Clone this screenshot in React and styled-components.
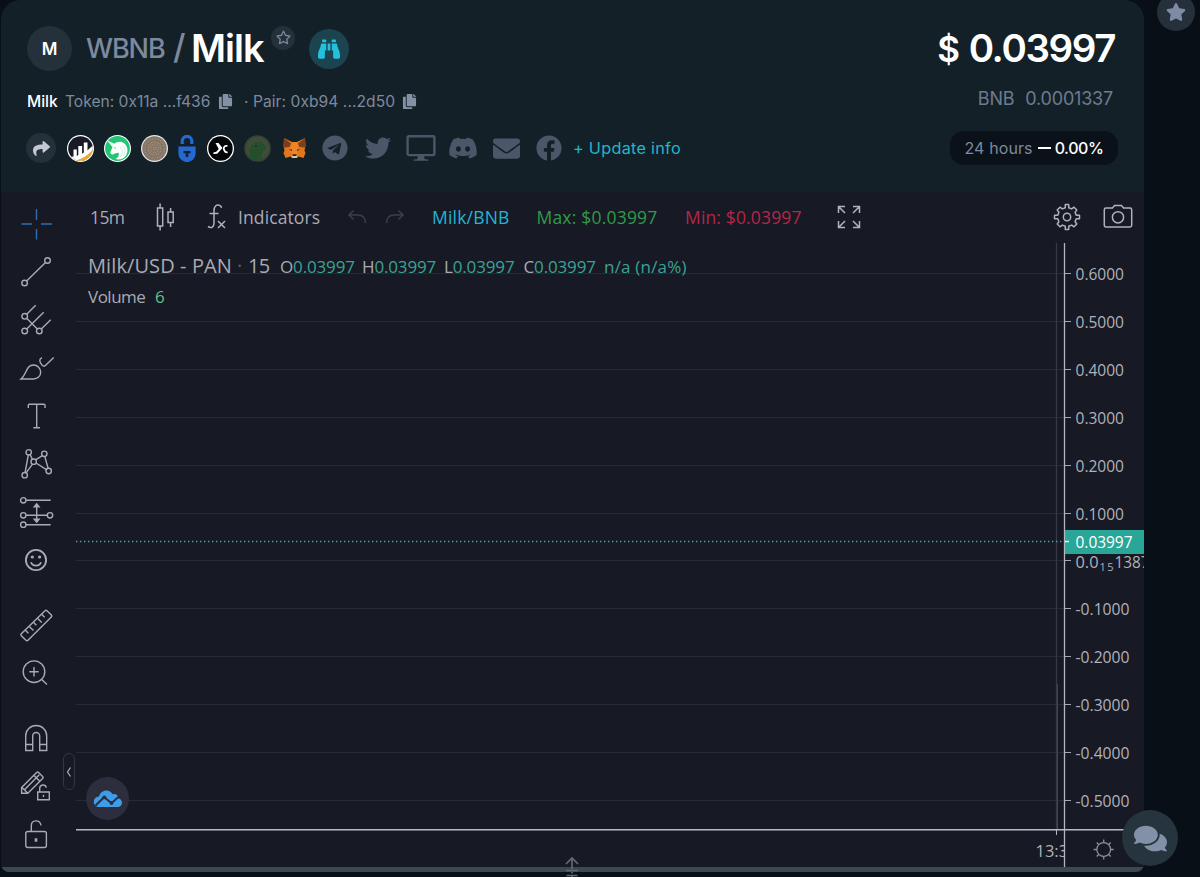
import React from 'react'
import styled, { createGlobalStyle } from 'styled-components';
import {
    FaBinoculars, FaComments, FaCopy, FaDiscord, FaEnvelope, FaFacebook,
    FaRegStar, FaShare, FaStar, FaTelegram, FaTwitter,
} from 'react-icons/fa';

const LEVELS = ['0.6000', '0.5000', '0.4000', '0.3000', '0.2000', '0.1000', null, '-0.1000', '-0.2000', '-0.3000', '-0.4000', '-0.5000'];

const levelY = (i) => Math.round(30 + i * 47.9) + 0.5;

const Crosshair = () => (
    <ToolSvg viewBox='0 0 40 40' $color='#2f6fb8'>
        <path d='M20.5 5v11M20.5 25v10.5M5.5 20H16M25 20h11' />
    </ToolSvg>
)

const TrendLine = () => (
    <ToolSvg viewBox='0 0 40 40'>
        <circle cx='31.5' cy='8.5' r='2.8' /><circle cx='8.6' cy='31' r='2.8' />
        <path d='M29.5 10.5L10.6 29' />
    </ToolSvg>
)

const Pitchfork = () => (
    <ToolSvg viewBox='0 0 40 40'>
        <circle cx='8.7' cy='16.3' r='2.8' /><circle cx='8.7' cy='31' r='2.8' /><circle cx='23.3' cy='31' r='2.8' />
        <path d='M10.7 14.3l9-9M10.7 29L27.7 12.3M25.3 29l9.4-9.2M10.7 18.3L21.3 29' />
    </ToolSvg>
)

const Brush = () => (
    <ToolSvg viewBox='0 0 40 40'>
        <path d='M5 31h12.5c4 0 7.2-3 7.2-6.7S21.5 17 17.5 17C10 17 11 26 5 31z' />
        <path d='M26 9.7c-3 1.2-3 4 .2 7.6 1.3 1.2 2.3 1.2 3.5 0L37.7 9.5' />
    </ToolSvg>
)

const TextTool = () => (
    <ToolSvg viewBox='0 0 40 40'>
        <path d='M12.3 12V9.3q0-1 1-1H28q1 0 1 1V12M20.7 8.3V31.7M17.3 31.7H24' />
    </ToolSvg>
)

const Pattern = () => (
    <ToolSvg viewBox='0 0 40 40'>
        <circle cx='12.7' cy='8.3' r='2.7' /><circle cx='28.3' cy='9.8' r='2.7' /><circle cx='17.7' cy='17.7' r='2.7' />
        <circle cx='8.7' cy='31.2' r='2.7' /><circle cx='32.7' cy='27' r='2.7' />
        <path d='M12.3 11L9.1 28.5M14.1 10.6l2.3 4.7M19.6 15.8l6.8-4.1M28.8 12.5l3.3 11.8M20 19l10.4 6.6M16.5 20.1l-6.4 8.7' />
    </ToolSvg>
)

const Position = () => (
    <ToolSvg viewBox='0 0 40 40'>
        <circle cx='7.3' cy='8.3' r='2.7' /><circle cx='7.3' cy='23.3' r='2.7' /><circle cx='34' cy='23.3' r='2.7' /><circle cx='7.3' cy='32.7' r='2.7' />
        <path d='M10 8.3h24.7M10 23.3h21.3M10 32.7h24.7M20.7 13v16' />
        <path d='M18.3 14.8l2.4-3 2.4 3zM18.3 27.2l2.4 3 2.4-3z' fill='currentColor' />
    </ToolSvg>
)

const Smile = () => (
    <ToolSvg viewBox='0 0 40 40'>
        <circle cx='20' cy='20' r='10.1' strokeWidth='1.9' />
        <circle cx='16.3' cy='17' r='1.6' fill='currentColor' stroke='none' /><circle cx='23.6' cy='17' r='1.6' fill='currentColor' stroke='none' />
        <path d='M15 22.3c1.5 4.5 8.5 4.5 10 0' strokeWidth='1.8' />
    </ToolSvg>
)

const Ruler = () => (
    <ToolSvg viewBox='0 0 40 40'>
        <path d='M29 5.7q1-1 2 0L35.3 10q1 1 0 2L12 35.3q-1 1-2 0L5.3 30.7q-1-1 0-2z' />
        <path d='M25.6 9.2l3 3M21.5 13.2l4.2 4.2M17.4 17.3l3 3M13.3 21.4l4.2 4.2M9.4 25.2l3 3' />
    </ToolSvg>
)

const ZoomIn = () => (
    <ToolSvg viewBox='0 0 40 40'>
        <circle cx='18' cy='18.7' r='10.8' />
        <path d='M18 14v9.4M13.3 18.7h9.4M25.7 26.4l5.3 5' />
    </ToolSvg>
)

const Magnet = () => (
    <ToolSvg viewBox='0 0 40 40'>
        <path d='M9.7 32.5V18a10.5 10.5 0 0 1 21 0v14.5h-7V18a3.5 3.5 0 0 0-7 0v14.5zM9.7 26.5h7M23.7 26.5h7' />
    </ToolSvg>
)

const PencilLock = () => (
    <ToolSvg viewBox='0 0 40 40'>
        <path d='M5.6 21.6L20.6 6.5q1-1 2 0l4 4q1 1 0 2L11.8 27.3H5.6zM6 21.5l6 6M8.5 23.8L23.3 8.8M17.8 9.3l6 6' />
        <path d='M21.7 26h11.6v7.7H21.7zM23.7 26v-3.5c0-4.3 5.7-4.6 6.6-.8M27.5 28.7v2.3' />
    </ToolSvg>
)

const Unlock = () => (
    <ToolSvg viewBox='0 0 40 40'>
        <rect x='9.8' y='17.5' width='20.6' height='16' rx='2' />
        <path d='M15.3 17.5V11.8c0-6.3 8.7-6.6 9.7-.3' />
        <path d='M20 24.2v3.6' strokeWidth='2.6' />
    </ToolSvg>
)

const TOOLS = [
    [Crosshair, TrendLine, Pitchfork, Brush, TextTool, Pattern, Position, Smile],
    [Ruler, ZoomIn],
    [Magnet, PencilLock, Unlock],
];

const PooLogo = () => (
    <svg width='27' height='27' viewBox='0 0 27 27'>
        <clipPath id='poo'><circle cx='13.5' cy='13.5' r='12.3' /></clipPath>
        <circle cx='13.5' cy='13.5' r='13.5' fill='#fff' />
        <g clipPath='url(#poo)'>
            <rect width='27' height='27' fill='#171a24' />
            <path d='M0 22.5Q16 22 27 9v18H0z' fill='#fff' />
            <path d='M5 26.500Q18 24 27 13.500V27z' fill='#e9a92d' />
            <path d='M6.500 14.500h3.300V22H6.500zM11.300 11h3.800v10h-3.800zM16.800 7.500h3.700V18h-3.700z' fill='#fff' />
        </g>
    </svg>
)

const UnicornLogo = () => (
    <svg width='27' height='27' viewBox='0 0 27 27'>
        <circle cx='13.5' cy='13.5' r='13.5' fill='#fff' />
        <circle cx='13.5' cy='13.5' r='12.4' fill='#21c674' />
        <path d='M3 5.500L10.500 8.700c2.500-2.200 7-2.700 10-.2 3.500 3.200 3.800 8.500 1.500 12-2.300 3.300-6.700 4.700-10.500 3.500 3-1.500 4-4 3-6.500-1.500.8-3.500.5-5 1.700-1.500.8-3.700-.5-3-2.200L8.500 12z' fill='#fff' />
        <path d='M15.500 11.500c3.500 2.500 4 7 .5 11M18.500 10.500c3 3 3.200 7 .8 10.500' stroke='#b5ebd0' strokeWidth='.8' fill='none' />
        <circle cx='11' cy='13' r='.7' fill='#21c674' />
    </svg>
)

const CoinLogo = () => (
    <svg width='27' height='27' viewBox='0 0 27 27'>
        <circle cx='13.5' cy='13.5' r='13.5' fill='#e6e4e2' />
        <circle cx='13.5' cy='13.5' r='12.2' fill='#85776a' />
        <g fill='none' stroke='#a8916f' strokeWidth='1.2'>
            <circle cx='13.5' cy='13.5' r='9.5' strokeDasharray='1.1 1.7' />
            <circle cx='13.5' cy='13.5' r='6.5' strokeDasharray='1.3 1.1' />
            <circle cx='13.5' cy='13.5' r='4' strokeDasharray='1 1.3' />
            <circle cx='13.5' cy='13.5' r='1.3' strokeDasharray='1 1' />
        </g>
        <circle cx='13.5' cy='13.5' r='8' fill='none' stroke='#6e6258' strokeDasharray='1 2' />
    </svg>
)

const PadlockLogo = () => (
    <svg width='18' height='27' viewBox='0 0 18 27'>
        <path d='M4.2 9V6.2a4.8 4.8 0 0 1 9.6 0V9' stroke='#2469d2' strokeWidth='3.2' fill='none' />
        <path d='M.4 11.5h17.2v7a8.6 8.6 0 0 1-17.2 0z' fill='#2469d2' />
        <path d='M5.500 16h7v2.200h-2.200V22H7.700v-3.800H5.500z' fill='#15222a' />
    </svg>
)

const DexLogo = () => (
    <svg width='27' height='27' viewBox='0 0 27 27'>
        <circle cx='13.5' cy='13.5' r='13.5' fill='#fff' />
        <circle cx='13.5' cy='13.5' r='12.2' fill='#030405' />
        <path d='M8.500 8h3l4 5-2.300 2.500-3 3.200-4 .3.500-1.700 2.300-.3 2.700-3z' fill='#fff' />
        <path d='M20.500 11c-2.700-.6-3.500 1-3.800 2.500.4 2 1.700 4 3.900 3.800' stroke='#fff' strokeWidth='1.7' fill='none' />
    </svg>
)

const GeckoLogo = () => (
    <svg width='27' height='27' viewBox='0 0 27 27'>
        <circle cx='13.5' cy='13.5' r='13.3' fill='#344436' />
        <circle cx='13.5' cy='13.5' r='11.7' fill='#3f4c3a' />
        <path d='M6 24c-1.5-6-.5-14 5-17 4-1 8 .5 10.5 4 1.5 2.5 0 4-2.5 5-1.5 2-1.500 3.500-1 8-3 1.700-8 2-12 0z' fill='#23502a' />
        <circle cx='12' cy='11' r='2' fill='#3b4a38' /><circle cx='12' cy='11' r='1' fill='#17251c' />
    </svg>
)

const FoxLogo = () => (
    <svg width='23' height='22' viewBox='0 0 23 22'>
        <path d='M1 1l8 4h5l8-4 .5 8-1 4.500 1 2.500-2 5-5-1.500-2 1.500h-4l-2-1.500L2.500 21l-2-5 1-2.500L.5 9z' fill='#e2761b' />
        <path d='M1 1l7 5.500-1.500 3.500-5.500.500zM22 1l-7 5.500 1.500 3.500 5.500.5z' fill='#7b3f1d' />
        <path d='M9 5h5l2 7-2 6H9l-2-6z' fill='#ee8429' />
        <path d='M6 12.300l3 .3v1.700zM17 12.300l-3 .3v1.700z' fill='#233447' />
        <path d='M8.500 18.200h6l-.5 2.800H9z' fill='#d6c3b4' /><path d='M9.700 17.300h3.600l.4 1.700H9.300z' fill='#2b2527' />
    </svg>
)

const MonitorIcon = () => (
    <svg width='30' height='28' viewBox='0 0 30 28'>
        <rect x='1.6' y='2.3' width='26.8' height='18.8' rx='1.5' fill='none' stroke='#4b5768' strokeWidth='2.4' />
        <path d='M12 22h6l.8 3.300H21q1.500 0 1.500 1.400H7.500q0-1.400 1.500-1.400h2.200z' fill='#4b5768' />
    </svg>
)

const Toolbar = () => (
    <TopBar>
        <BarText $left={14} $w={66} $ls={-0.6}>15m</BarText>
        <BarSlot $w={51}>
            <LineSvg width='20' height='30' viewBox='0 0 20 30'>
                <path d='M1.5 6h5.200v18H1.5zM4.1 1.5V6M4.1 24v4.5M12 10h5.200v10.500H12zM14.6 6v4M14.6 20.5V25' />
            </LineSvg>
        </BarSlot>
        <BarSlot $w={31}>
            <LineSvg width='20' height='28' viewBox='0 0 20 28'>
                <path d='M1 23.500c3.500 2.300 6 .5 6-3.500V8c0-5 2.500-7.300 6.500-5.200q1 1 .8 2M2.500 10.500h9M11 18l7 7M18 18l-7 7' />
            </LineSvg>
        </BarSlot>
        <BarText $w={109} $ls={0.1}>Indicators</BarText>
        <BarSlot $w={38}>
            <LineSvg width='20' height='16' viewBox='0 0 20 16' $color='#3c3f4b'>
                <path d='M6.500 1.500L2 6l4.500 4.500M2 6h9q7 0 7.500 8' />
            </LineSvg>
        </BarSlot>
        <BarSlot $w={47}>
            <LineSvg width='20' height='16' viewBox='0 0 20 16' $color='#3c3f4b'>
                <path d='M13.500 1.500L18 6l-4.500 4.500M18 6H9Q2 6 1.500 14' />
            </LineSvg>
        </BarSlot>
        <BarText $w={104.5} $ls={0.2} $color='#25b3d6'>Milk/BNB</BarText>
        <BarText $w={148.500} $ls={0.2} $color='#2f9b48'>Max: $0.03997</BarText>
        <BarText $w={152} $ls={0.15} $color='#b82547'>Min: $0.03997</BarText>
        <BarSlot $w={215.5}>
            <LineSvg width='24' height='24' viewBox='0 0 24 24'>
                <path d='M1.500 8V1.500H8M1.500 1.500L8 8M16 1.500h6.500V8M22.500 1.500L16 8M1.500 16v6.500H8M1.500 22.500L8 16M16 22.500h6.500V16M22.500 22.500L16 16' />
            </LineSvg>
        </BarSlot>
        <BarSlot $w={50.500}>
            <LineSvg width='28' height='28' viewBox='0 0 28 28'>
                <path d='M12.300 1.500h3.400v3.300l3 1.100L21 4.200 23.800 7l-1.700 2.300 1.100 3h3.300v3.400h-3.300l-1.100 3 1.700 2.300-2.800 2.800-2.300-1.700-3 1.100v3.300h-3.400v-3.300l-3-1.100L7 23.800 4.200 21l1.700-2.300-1.100-3H1.500v-3.400h3.300l1.100-3L4.200 7 7 4.200l2.300 1.700 3-1.100z' strokeLinejoin='round' />
                <circle cx='14' cy='14' r='3.700' />
            </LineSvg>
        </BarSlot>
        <BarSlot $w={30}>
            <LineSvg width='30' height='26' viewBox='0 0 30 26'>
                <path d='M3 4h6.500l2-2.500h7l2 2.500H27q1.700 0 1.700 1.700v15.600q0 1.700-1.700 1.700H3q-1.700 0-1.700-1.700V5.700Q1.300 4 3 4z' />
                <circle cx='15' cy='13.300' r='5.600' />
            </LineSvg>
        </BarSlot>
    </TopBar>
)

const Plot = () => (
    <PlotSvg width='1068' height='624' viewBox='0 0 1068 624'>
        {LEVELS.map((label, i) => (
            <g key={i}>
                <path d={`M0 ${levelY(i)}H988`} stroke='#282b36' />
                <path d={`M988 ${levelY(i)}h7`} stroke='#a6a8b1' />
                {label && (
                    <text x='999.5' y={levelY(i) + 6.5} textLength={label.startsWith('-') ? 54 : 48.5} lengthAdjust='spacingAndGlyphs'>{label}</text>
                )}
            </g>
        ))}
        <path d='M980.5 0V587' stroke='#363943' strokeWidth='1.4' />
        <path d='M981.5 441V587' stroke='#3b4850' />
        <text x='999.5' y='324.5' textLength='23' lengthAdjust='spacingAndGlyphs'>0.0</text>
        <text x='1023.5' y='327.5' fontSize='11' textLength='14' lengthAdjust='spacing'>15</text>
        <text x='1038.5' y='324.5' textLength='35' lengthAdjust='spacingAndGlyphs'>1387</text>
        <path d='M0 298.5H988' stroke='#48a8a2' strokeWidth='1.3' strokeDasharray='1.4 2.600' />
        <rect x='988' y='287' width='80' height='24' fill='#2aa698' />
        <path d='M988 298.5h5' stroke='#fff' strokeWidth='1.4' />
        <text x='999.5' y='304.5' fill='#fff' textLength='57' lengthAdjust='spacingAndGlyphs'>0.03997</text>
        <path d='M988.5 0V624' stroke='#b4b6bf' strokeWidth='1.3' />
        <path d='M0 586.8H1068' stroke='#b9bbc4' strokeWidth='1.4' />
        <path d='M980.5 587v5' stroke='#b4b6bf' />
        <clipPath id='timeAxis'><rect x='0' y='588' width='988' height='36' /></clipPath>
        <text x='959.5' y='613.5' clipPath='url(#timeAxis)' textLength='42' lengthAdjust='spacingAndGlyphs'>13:30</text>
        <g stroke='#8d8f99' fill='none'>
            <circle cx='1027.7' cy='606.5' r='6.9' strokeWidth='1.3' />
            <path d='M1027.700 596.500v3M1027.700 613.500v3M1017.700 606.500h3M1034.700 606.500h3M1020.700 599.500l2 2M1032.700 611.500l2 2M1034.700 599.500l-2 2M1022.700 611.500l-2 2' strokeWidth='1.3' />
        </g>
    </PlotSvg>
)

const App = () => {
    return (
        <Page>
            <GlobalStyle />
            <Card>
                <Header>
                    <TokenInfo>
                        <TitleRow>
                            <Avatar>M</Avatar>
                            <Base>WBNB</Base>
                            <Slash>/</Slash>
                            <Token>Milk</Token>
                            <SmallStar><FaRegStar size={15} /></SmallStar>
                            <Watch><FaBinoculars size={22} /></Watch>
                        </TitleRow>
                        <AddressRow>
                            <Address $w={38} $ls={-0.05} $strong>Milk</Address>
                            <Address $w={153} $ls={0}>Token: 0x11a ...f436</Address>
                            <FaCopy size={15} />
                            <Address $left={11} $w={158} $ls={0.05}>· Pair: 0xb94 ...2d50</Address>
                            <FaCopy size={15} />
                        </AddressRow>
                        <LinksRow>
                            <Share><FaShare size={17} /></Share>
                            <LinkSlot $w={48}><PooLogo /></LinkSlot>
                            <LinkSlot $w={27}><UnicornLogo /></LinkSlot>
                            <LinkSlot $w={47}><CoinLogo /></LinkSlot>
                            <LinkSlot $w={18}><PadlockLogo /></LinkSlot>
                            <LinkSlot $w={48}><DexLogo /></LinkSlot>
                            <LinkSlot $w={26}><GeckoLogo /></LinkSlot>
                            <LinkSlot $w={48}><FoxLogo /></LinkSlot>
                            <LinkSlot $w={34}><FaTelegram size={26} /></LinkSlot>
                            <LinkSlot $w={51}><FaTwitter size={26} /></LinkSlot>
                            <LinkSlot $w={35}><MonitorIcon /></LinkSlot>
                            <LinkSlot $w={50}><FaDiscord size={30} /></LinkSlot>
                            <LinkSlot $w={36}><FaEnvelope size={27} /></LinkSlot>
                            <LinkSlot $w={49}><FaFacebook size={26} /></LinkSlot>
                            <UpdateLink>+ Update info</UpdateLink>
                        </LinksRow>
                    </TokenInfo>
                    <PriceInfo>
                        <Price><span>$</span>0.03997</Price>
                        <BnbPrice><span>BNB</span>0.0001337</BnbPrice>
                        <Change><span>24 hours</span><Dash />0.00%</Change>
                    </PriceInfo>
                </Header>
                <Chart>
                    <Tools>
                        {TOOLS.map((group, i) => (
                            <ToolGroup key={i}>
                                {group.map((Tool, j) => <ToolCell key={j}><Tool /></ToolCell>)}
                            </ToolGroup>
                        ))}
                    </Tools>
                    <Main>
                        <Toolbar />
                        <PlotArea>
                            <Plot />
                            <Legend>
                                <LegendRow $size={20}>
                                    <Word $w={149} $ls={0.1}>Milk/USD - PAN</Word>
                                    <Word $w={11} $color='#5b5e69'>·</Word>
                                    <Word $w={32} $ls={-0.8}>15</Word>
                                    <Ohlc $w={82}>O<b>0.03997</b></Ohlc>
                                    <Ohlc $w={82}>H<b>0.03997</b></Ohlc>
                                    <Ohlc $w={79.5}>L<b>0.03997</b></Ohlc>
                                    <Ohlc $w={80.5}>C<b>0.03997</b></Ohlc>
                                    <Ohlc $w={90} $wide><b>n/a (n/a%)</b></Ohlc>
                                </LegendRow>
                                <LegendRow $size={17}>
                                    <Word $w={67} $ls={-0.5}>Volume</Word>
                                    <Word $w={10} $color='#5fc08d'>6</Word>
                                </LegendRow>
                            </Legend>
                            <Collapse>
                                <svg width='6' height='12' viewBox='0 0 6 12'><path d='M4.500 1.500L1.500 6l3 4.500' stroke='#a9abb4' strokeWidth='1.3' fill='none' /></svg>
                            </Collapse>
                            <CloudBadge>
                                <svg width='30' height='20' viewBox='0 0 30 20'>
                                    <path d='M6 18a5.300 5.300 0 0 1 0-10.600C7.500 1 16.500-1 19.500 5.200c3.500-.8 6 1.300 6 4.300 5 1 4.500 8.500-1 8.500z' fill='#3e9de8' />
                                    <path d='M2.500 16.500l8.700-8.300 7.300 6L27 6.500' stroke='#2c2e3e' strokeWidth='2' fill='none' />
                                    <circle cx='11.3' cy='8.3' r='1.9' fill='#2c2e3e' /><circle cx='18.5' cy='14' r='1.9' fill='#2c2e3e' />
                                </svg>
                            </CloudBadge>
                        </PlotArea>
                    </Main>
                </Chart>
                <BottomBar />
            </Card>
            <FloatingStar><FaStar size={20} /></FloatingStar>
            <ChatButton><FaComments size={33} /></ChatButton>
            <ResizeHandle>
                <svg width='16' height='22' viewBox='0 0 16 22'>
                    <path d='M8 2v11M2 8l6-6 6 6M2 14.500h12M8 16v1.500M2.500 19.500h11M8 20v2' stroke='#626974' strokeWidth='1.7' fill='none' />
                </svg>
            </ResizeHandle>
        </Page>
    )
}

const GlobalStyle = createGlobalStyle`
    * {
        box-sizing: border-box;
    }

    body {
        margin: 0;
        background-color: #080f16;
        font-family: Inter, sans-serif;
    }

    svg {
        display: block;
        flex-shrink: 0;
    }
`;

const Page = styled.div`
    position: relative;
    width: 1200px;
    height: 877px;
    padding-left: 1px;
    overflow: hidden;
    background-color: #080f16;
`;

const Card = styled.div`
    width: 1143px;
    height: 872px;
    border-radius: 20px 20px 8px 8px;
    overflow: hidden;
    background-color: #171924;
`;

const Header = styled.div`
    display: flex;
    justify-content: space-between;
    height: 192px;
    padding: 26px 25px 0 25px;
    background-color: #142027;
`;

const TokenInfo = styled.div`
    display: flex;
    flex-direction: column;
`;

const TitleRow = styled.div`
    display: flex;
    align-items: center;
    height: 45px;
    white-space: nowrap;
`;

const Circle = styled.div`
    display: flex;
    align-items: center;
    justify-content: center;
    flex-shrink: 0;
    border-radius: 50%;
    background-color: #25313a;
`;

const Avatar = styled(Circle)`
    width: 45px;
    height: 45px;
    margin: 0 14px 0 1px;
    color: #fff;
    font-size: 17px;
    font-weight: 600;
`;

const Base = styled.div`
    width: 87px;
    color: #7d899d;
    font-size: 27px;
    font-weight: 500;
    letter-spacing: -1.1px;
`;

const Slash = styled.div`
    width: 18px;
    padding-bottom: 4px;
    color: #7d899d;
    font-size: 34px;
    font-weight: 500;
    line-height: 40px;
`;

const Token = styled.div`
    width: 80px;
    padding-bottom: 2px;
    color: #fff;
    font-size: 38px;
    font-weight: 600;
    letter-spacing: -1px;
`;

const SmallStar = styled(Circle)`
    width: 24px;
    height: 24px;
    margin-bottom: 22px;
    color: #7d899d;
`;

const Watch = styled(Circle)`
    width: 40px;
    height: 40px;
    margin-left: 14px;
    background-color: #1c4350;
    color: #23bfdc;
`;

const AddressRow = styled.div`
    display: flex;
    align-items: center;
    height: 20px;
    margin-top: 20px;
    padding: 0 0 0 1px;
    color: #8490a4;
`;

const Address = styled.div`
    width: ${({ $w }) => $w}px;
    margin: 1px 0 0 ${({ $left }) => $left || 0}px;
    color: ${({ $strong }) => $strong ? '#fff' : '#7d899d'};
    font-size: 15.6px;
    font-weight: ${({ $strong }) => $strong ? 500 : 400};
    letter-spacing: ${({ $ls }) => $ls}px;
    white-space: nowrap;
`;

const LinksRow = styled.div`
    display: flex;
    align-items: center;
    height: 30px;
    margin-top: 22px;
    color: #4b5768;
`;

const Share = styled(Circle)`
    width: 30px;
    height: 30px;
    color: #c3cad6;
`;

const LinkSlot = styled.div`
    display: flex;
    justify-content: center;
    flex-shrink: 0;
    width: ${({ $w }) => $w}px;
`;

const UpdateLink = styled.div`
    color: #25b5c9;
    font-size: 16.3px;
    letter-spacing: 0.25px;
    white-space: nowrap;
`;

const PriceInfo = styled.div`
    display: flex;
    flex-direction: column;
    align-items: flex-end;
    color: #fff;
`;

const Price = styled.div`
    height: 44px;
    margin-right: 4px;
    font-size: 38.5px;
    font-weight: 600;
    line-height: 44px;
    letter-spacing: -1.4px;

    span {
        margin-right: 10px;
        font-size: 35px;
    }
`;

const BnbPrice = styled.div`
    height: 24px;
    margin: 17px 6px 0 0;
    color: #6e7b8f;
    font-size: 18px;
    line-height: 24px;
    letter-spacing: -0.2px;

    span {
        margin-right: 11px;
    }
`;

const Change = styled.div`
    display: flex;
    align-items: center;
    justify-content: center;
    width: 168px;
    height: 34px;
    margin: 20px 1px 0 0;
    border-radius: 14px;
    background-color: #0b1118;
    font-size: 16px;
    font-weight: 500;
    letter-spacing: -0.4px;

    span {
        color: #7d899d;
        font-weight: 400;
        letter-spacing: 0.1px;
    }
`;

const Dash = styled.i`
    width: 13px;
    height: 2px;
    margin: 0 4px 0 5px;
    background-color: #fff;
`;

const Chart = styled.div`
    display: flex;
    height: 675px;
    background-color: #171924;
    font-family: "Open Sans", sans-serif;
`;

const Tools = styled.div`
    display: flex;
    flex-direction: column;
    gap: 17px;
    width: 75px;
    padding: 8px 0 0 15px;
`;

const ToolGroup = styled.div`
    display: flex;
    flex-direction: column;
`;

const ToolCell = styled.div`
    display: flex;
    align-items: center;
    height: 48px;
`;

const ToolSvg = styled.svg`
    width: 40px;
    height: 40px;
    color: ${({ $color }) => $color || '#a9abb4'};
    fill: none;
    stroke: currentColor;
    stroke-width: 1.4;
`;

const LineSvg = styled.svg`
    fill: none;
    stroke: ${({ $color }) => $color || '#b0b2bb'};
    stroke-width: 1.5;
`;

const Main = styled.div`
    width: 1068px;
`;

const TopBar = styled.div`
    display: flex;
    align-items: center;
    height: 51px;
    padding-bottom: 2px;
`;

const BarText = styled.div`
    flex-shrink: 0;
    width: ${({ $w }) => $w}px;
    margin-left: ${({ $left }) => $left || 0}px;
    color: ${({ $color }) => $color || '#a9abb4'};
    font-size: 17.5px;
    letter-spacing: ${({ $ls }) => $ls}px;
    white-space: nowrap;
`;

const BarSlot = styled.div`
    flex-shrink: 0;
    width: ${({ $w }) => $w}px;
`;

const PlotArea = styled.div`
    position: relative;
    height: 624px;
`;

const PlotSvg = styled.svg`
    fill: #b0b2ba;
    font-family: "Open Sans", sans-serif;
    font-size: 16px;
    font-weight: 500;
`;

const Legend = styled.div`
    position: absolute;
    top: 7px;
    left: 12px;
`;

const LegendRow = styled.div`
    display: flex;
    align-items: center;
    height: 31px;
    color: #a9abb4;
    font-size: ${({ $size }) => $size}px;
    white-space: nowrap;
`;

const Word = styled.div`
    width: ${({ $w }) => $w}px;
    color: ${({ $color }) => $color || 'inherit'};
    letter-spacing: ${({ $ls }) => $ls || 0}px;
`;

const Ohlc = styled(Word)`
    padding-top: 1px;
    font-size: 17px;
    letter-spacing: ${({ $wide }) => $wide ? 0.2 : -0.15}px;

    b {
        color: #3aa396;
        font-weight: 400;
    }
`;

const Collapse = styled.div`
    position: absolute;
    top: 510px;
    left: -13px;
    display: flex;
    align-items: center;
    justify-content: center;
    width: 12px;
    height: 37px;
    border: 1px solid #343640;
    border-radius: 6px;
`;

const CloudBadge = styled(Circle)`
    position: absolute;
    top: 534px;
    left: 10px;
    width: 43px;
    height: 43px;
    background-color: #2c2e3e;
`;

const BottomBar = styled.div`
    height: 5px;
    background-color: #3b4850;
`;

const FloatingStar = styled(Circle)`
    position: absolute;
    top: -7px;
    left: 1157px;
    width: 38px;
    height: 38px;
    background-color: #25303a;
    color: #7f8ba4;
`;

const ChatButton = styled(Circle)`
    position: absolute;
    top: 810px;
    left: 1122px;
    width: 56px;
    height: 56px;
    background-color: #25343d;
    color: #8290a8;
`;

const ResizeHandle = styled.div`
    position: absolute;
    top: 856px;
    left: 564px;
`;

export default App
